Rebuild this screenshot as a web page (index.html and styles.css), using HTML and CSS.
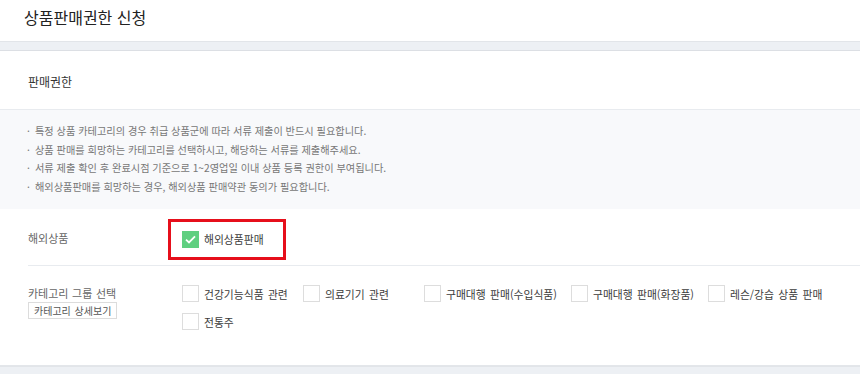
FILE: index.html
```html
<!DOCTYPE html>
<html lang="ko">
<head>
    <meta charset="UTF-8">
    <meta name="viewport" content="width=device-width, initial-scale=1.0">
    <title>상품판매권한 신청</title>
    <link rel="stylesheet" href="styles.css">
</head>
<body>

<h1 class="page-title">상품판매권한 신청</h1>
<div class="band"></div>

<div class="section">
    <div class="section-head">판매권한</div>

    <ul class="notice">
        <li>특정 상품 카테고리의 경우 취급 상품군에 따라 서류 제출이 반드시 필요합니다.</li>
        <li>상품 판매를 희망하는 카테고리를 선택하시고, 해당하는 서류를 제출해주세요.</li>
        <li>서류 제출 확인 후 완료시점 기준으로 1~2영업일 이내 상품 등록 권한이 부여됩니다.</li>
        <li>해외상품판매를 희망하는 경우, 해외상품 판매약관 동의가 필요합니다.</li>
    </ul>

    <div class="form-row overseas">
        <div class="row-label">해외상품</div>
        <div class="row-body">
            <label class="check-item highlight">
                <span class="check-box checked">
                    <svg width="11" height="9" viewBox="0 0 11 9"><path d="M1 4.6 L4 7.4 L10 1.4" fill="none" stroke="#fff" stroke-width="1.8"/></svg>
                </span>
                <span class="check-text">해외상품판매</span>
            </label>
        </div>
    </div>

    <div class="form-row category">
        <div class="row-label">
            <div>카테고리 그룹 선택</div>
            <button class="detail-btn">카테고리 상세보기</button>
        </div>
        <div class="row-body check-list">
            <label class="check-item"><span class="check-box"></span><span class="check-text">건강기능식품 관련</span></label>
            <label class="check-item"><span class="check-box"></span><span class="check-text">의료기기 관련</span></label>
            <label class="check-item"><span class="check-box"></span><span class="check-text">구매대행 판매(수입식품)</span></label>
            <label class="check-item"><span class="check-box"></span><span class="check-text">구매대행 판매(화장품)</span></label>
            <label class="check-item"><span class="check-box"></span><span class="check-text">레슨/강습 상품 판매</span></label>
            <label class="check-item"><span class="check-box"></span><span class="check-text">전통주</span></label>
        </div>
    </div>
</div>

<div class="band bottom"></div>

</body>
</html>
```

FILE: styles.css
```css
* {
    margin: 0;
    padding: 0;
    box-sizing: border-box;
}

body {
    background: #fff;
    font-family: 'Noto Sans CJK KR', 'Noto Sans', sans-serif;
    color: #333;
    width: 860px;
    overflow: hidden;
}

.page-title {
    height: 41px;
    padding-left: 24px;
    font-size: 16px;
    font-weight: normal;
    line-height: 35px;
    color: #222;
}

.band {
    height: 10px;
    background: #edf0f4;
    border-top: 1px solid #e2e5e9;
    border-bottom: 1px solid #dcdfe4;
}

.band.bottom {
    height: 12px;
    border-bottom: none;
}

.section-head {
    height: 59px;
    padding-left: 28px;
    font-size: 12px;
    line-height: 61px;
    color: #333;
    border-bottom: 1px solid #e8ebef;
}

.notice {
    list-style: none;
    background: #f8f9fb;
    padding: 12px 0 13px 27px;
    font-size: 10.2px;
    line-height: 18.5px;
    color: #777;
}

.notice li::before {
    content: "·";
    display: inline-block;
    width: 8px;
}

.form-row {
    display: flex;
    margin-left: 28px;
}

.row-label {
    width: 154px;
    font-size: 11px;
    color: #666;
    word-spacing: 0.5px;
}

.overseas {
    height: 57px;
    align-items: center;
    border-bottom: 1px solid #e8ebef;
}

.overseas .row-label {
    padding-top: 2px;
}

.category {
    padding: 19px 0 35px;
    margin-left: 0;
    padding-left: 28px;
    border-bottom: 1px solid #e3e6ea;
}

.category .row-label {
    line-height: 17px;
}

.detail-btn {
    display: block;
    height: 17px;
    padding: 0 5px;
    font-family: inherit;
    font-size: 10px;
    line-height: 15px;
    color: #555;
    background: #fff;
    border: 1px solid #dcdcdc;
    word-spacing: 1px;
}

.check-list {
    display: flex;
    flex-wrap: wrap;
    flex: 1;
    column-gap: 14px;
    row-gap: 11px;
}

.check-item {
    display: flex;
    align-items: center;
    gap: 5px;
    min-width: 107px;
    height: 17px;
    font-size: 10.8px;
    color: #3c3c3c;
    word-spacing: 1.3px;
}

.check-box {
    display: flex;
    justify-content: center;
    align-items: center;
    width: 17px;
    height: 17px;
    border: 1px solid #dddddd;
    background: #fff;
}

.check-box.checked {
    background: #5fcf80;
    border-color: #5fcf80;
}

.highlight {
    position: relative;
    margin-top: 4px;
}

.highlight::after {
    content: "";
    position: absolute;
    box-sizing: border-box;
    top: -12px;
    bottom: -12px;
    left: -14px;
    width: 118px;
    border: 3px solid #e60f1b;
}
```
